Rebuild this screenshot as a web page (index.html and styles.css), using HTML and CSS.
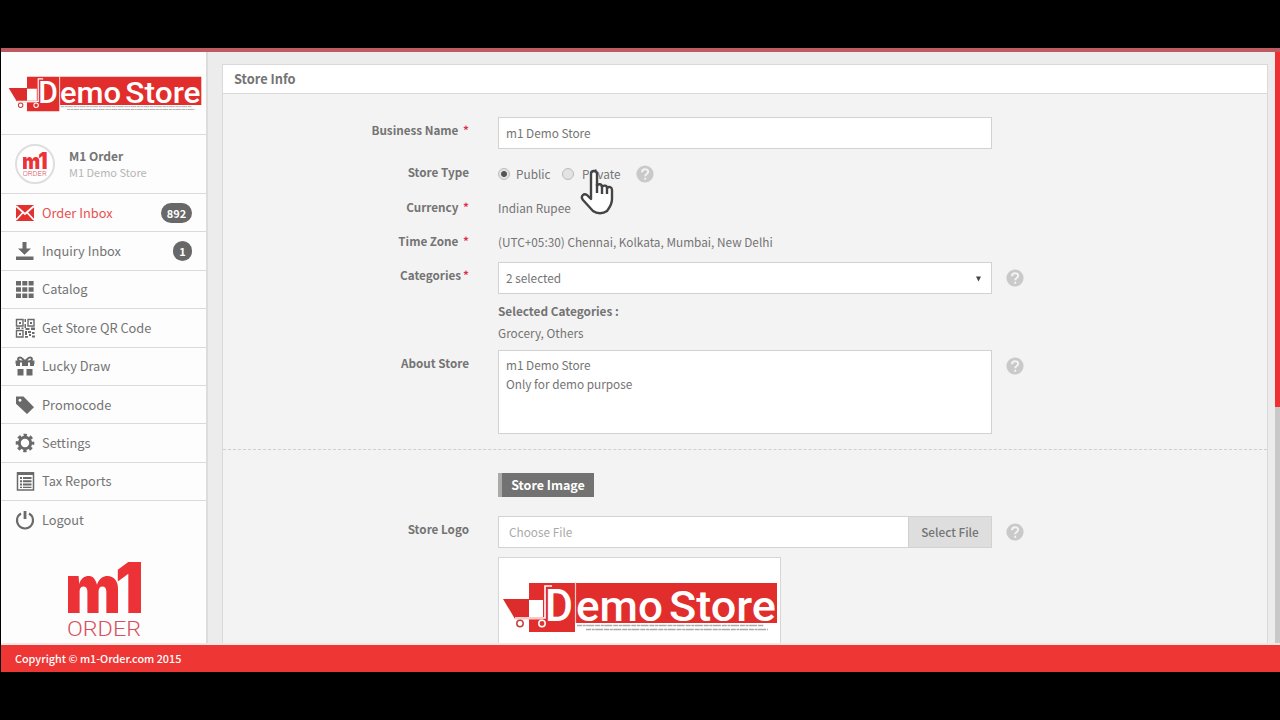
FILE: index.html
```html
<!DOCTYPE html>
<html lang="en">
<head>
    <meta charset="UTF-8">
    <meta name="viewport" content="width=device-width, initial-scale=1.0">
    <title>m1 Order - Store Info</title>
    <link rel="stylesheet" href="styles.css">
</head>
<body>
    <!-- shared drawings -->
    <svg class="defs" width="0" height="0">
        <symbol id="demo-logo" viewBox="0 0 276 51">
            <path d="M1 17h26v20H13z" fill="#dd2c2c"/>
            <path d="M27 1h46v49H27zM74 1h201v40H74z" fill="#e22d2d"/>
            <path d="M27 18h14v17H27z" fill="#fff"/>
            <path d="M50 4h-7v32H13" fill="none" stroke="#fff" stroke-width="1.6"/>
            <path d="M13 37h28M73.5 0v41" fill="none" stroke="#f3c9c5" stroke-width="1.2"/>
            <circle cx="18" cy="41.500" r="3.2" fill="#fff" stroke="#c4423f" stroke-width="1.5"/>
            <circle cx="40" cy="41.500" r="3.2" fill="#d33" stroke="#fff" stroke-width="1.5"/>
            <text class="logo-text" x="43" y="38.500" font-size="44" textLength="28" lengthAdjust="spacingAndGlyphs">D</text>
            <text class="logo-text" x="74" y="38.500" font-size="43" textLength="87" lengthAdjust="spacingAndGlyphs">emo</text>
            <text class="logo-text" x="167" y="38.500" font-size="43" textLength="107" lengthAdjust="spacingAndGlyphs">Store</text>
            <path d="M75 43.5h187M84 47.5h182" fill="none" stroke="#aaa" stroke-width="1.3" stroke-dasharray="5 .7 3 .5 8 .9"/>
        </symbol>
        <symbol id="m1-logo" viewBox="0 0 74 76">
            <text class="m1-text" x="-3" y="51" font-size="67" textLength="56" lengthAdjust="spacingAndGlyphs">m</text>
            <text class="m1-text" x="47" y="51" font-size="70" textLength="29" lengthAdjust="spacingAndGlyphs">1</text>
            <text class="order-text" x="-1" y="74" font-size="21" textLength="74" lengthAdjust="spacingAndGlyphs">ORDER</text>
        </symbol>
        <symbol id="help" viewBox="0 0 18 18">
            <circle cx="9" cy="9" r="8.6" fill="#c9c9c9"/>
            <path d="M6 7.2C6 3.2 12.2 3.3 12.2 6.8C12.2 9 9.2 8.9 9.2 11.2M9.2 12.7v2" fill="none" stroke="#f3f3f3" stroke-width="2"/>
        </symbol>
    </svg>

    <div class="app">
        <div class="main">
            <aside class="sidebar">
                <div class="brand"><svg width="194" height="36"><use href="#demo-logo"/></svg></div>
                <div class="profile">
                    <div class="avatar"><svg width="24" height="25"><use href="#m1-logo"/></svg></div>
                    <div>
                        <div class="profile-name">M1 Order</div>
                        <div class="profile-store">M1 Demo Store</div>
                    </div>
                </div>
                <nav class="menu">
                    <a class="item active">
                        <svg class="icon" viewBox="0 0 20 18"><path d="M1 1h18v16H1z" fill="#e3312f"/><path d="M1 2l9 8 9-8M1 16l6.5-7M19 16l-6.5-7" fill="none" stroke="#fff" stroke-width="1.8"/></svg>
                        <span>Order Inbox</span><b class="count">892</b>
                    </a>
                    <a class="item">
                        <svg class="icon" viewBox="0 0 20 20"><path d="M7.500 1h4v6.500H16l-6.500 6.300L3 7.500h4.500zM1 15.500h17.500v3.500H1z"/></svg>
                        <span>Inquiry Inbox</span><b class="count">1</b>
                    </a>
                    <a class="item">
                        <svg class="icon" viewBox="0 0 20 20"><path d="M1 2h5v4.500H1zM7.300 2h5v4.500h-5zM13.600 2h5v4.500h-5zM1 8.200h5v4.500H1zM7.300 8.200h5v4.500h-5zM13.600 8.200h5v4.500h-5zM1 14.400h5v4.500H1zM7.300 14.400h5v4.500h-5zM13.600 14.400h5v4.500h-5z"/></svg>
                        <span>Catalog</span>
                    </a>
                    <a class="item">
                        <svg class="icon" viewBox="0 0 20 20"><path d="M1.5 1.5H8V8H1.5zM13 1.5h6V8h-6zM1.5 12.5H8V19H1.5z" fill="none" stroke="#6a6a6a" stroke-width="1.4"/><path d="M4 4h2v2H4zM15 4h2v2h-2zM4 15h2v2H4zM9.500 1h1.500v3H9.500zM9.500 6h1.500v4H9.500zM1 9.500h4V11H1zM6.500 9.500h2V11h-2zM10.500 10h4v2h-4zM16 9.500h4V12h-4zM10 13h2v4h-2zM13 13h3v2h-3zM17 14h2.500v2H17zM14 16h2v2h-2zM10 18h3v1.700h-3zM17 17.500h3v2h-3z"/></svg>
                        <span>Get Store QR Code</span>
                    </a>
                    <a class="item">
                        <svg class="icon" viewBox="0 0 20 20"><path d="M1.5 8V5.5h17V8M7.5 5.500C2 5.500 2 1.500 5 1.500c2 0 3 2.500 5 3.500 2-1 3-3.500 5-3.500 3 0 3 4-2.500 4" fill="none" stroke="#6a6a6a" stroke-width="1.9"/><path d="M1 6h4v4H1zM7 6h6v4H7zM15 6h4v4h-4zM2.500 13h6v6.500h-6zM11.500 13h6v6.500h-6z"/></svg>
                        <span>Lucky Draw</span>
                    </a>
                    <a class="item">
                        <svg class="icon" viewBox="0 0 20 20"><path fill-rule="evenodd" d="M1 1.500h7.500L19 12.200 12 19 1 8.800zM5 3.700a1.500 1.500 0 1 0 .01 0z"/></svg>
                        <span>Promocode</span>
                    </a>
                    <a class="item">
                        <svg class="icon" viewBox="0 0 20 20"><circle cx="10" cy="10" r="5.7" fill="none" stroke="#6a6a6a" stroke-width="3"/><circle cx="10" cy="10" r="7.9" fill="none" stroke="#6a6a6a" stroke-width="2.8" stroke-dasharray="3.3 2.905" stroke-dashoffset="1.65"/></svg>
                        <span>Settings</span>
                    </a>
                    <a class="item">
                        <svg class="icon" viewBox="0 0 20 20"><path d="M2.5 2h16v17h-16z" fill="none" stroke="#6a6a6a" stroke-width="1.5"/><path d="M2 1h17v3H2zM5 6h2v2H5zM8 6h8.500v2H8zM5 9.300h2v2H5zM8 9.300h8.500v2H8zM5 12.600h2v2H5zM8 12.600h8.500v2H8zM5 15.700h2V17H5zM8 15.700h8.500V17H8z"/></svg>
                        <span>Tax Reports</span>
                    </a>
                    <a class="item">
                        <svg class="icon" viewBox="0 0 20 20"><path d="M6 3.500a8 8 0 1 0 8 0" fill="none" stroke="#6a6a6a" stroke-width="2.1"/><path d="M8.600 1h2.800v8H8.600z"/></svg>
                        <span>Logout</span>
                    </a>
                </nav>
                <svg class="side-logo" width="74" height="76"><use href="#m1-logo"/></svg>
            </aside>

            <section class="content">
                <div class="panel">
                    <h2 class="panel-title">Store Info</h2>
                    <div class="form">
                        <div class="row row-name">
                            <label class="boxed">Business Name <i>*</i></label>
                            <div class="field">m1 Demo Store</div>
                        </div>
                        <div class="row row-text">
                            <label>Store Type</label>
                            <div class="choices">
                                <span class="radio checked"></span><span class="choice">Public</span>
                                <span class="radio"></span><span class="choice private">Private
                                    <svg class="hand" width="36" height="48" viewBox="0 0 36 48"><path d="M11 23V5c0-4 6-4 6 0v12c1-3 5-2 5 1 1-2 5-2 5 1 2-2 5-1 5 2v9c0 6-3 9-5 12-4 3-10 3-14 0L3 31c-3-4 1-7 4-5l4 4z" fill="#fff" stroke="#444" stroke-width="2.4" stroke-linejoin="round"/><path d="M17 15v9M22 17v8M27 19v6" stroke="#444" stroke-width="2.4"/></svg>
                                </span>
                                <svg width="18" height="18"><use href="#help"/></svg>
                            </div>
                        </div>
                        <div class="row row-text">
                            <label>Currency <i>*</i></label>
                            <div class="value">Indian Rupee</div>
                        </div>
                        <div class="row row-zone">
                            <label>Time Zone <i>*</i></label>
                            <div class="value">(UTC+05:30) Chennai, Kolkata, Mumbai, New Delhi</div>
                        </div>
                        <div class="row row-cat">
                            <label class="boxed">Categories<i>*</i></label>
                            <div>
                                <div class="field select">2 selected<svg width="5" height="6" viewBox="0 0 6 7"><path d="M0 .5h6L3 6.500z" fill="#444"/></svg></div>
                                <div class="picked"><b>Selected Categories :</b><br>Grocery, Others</div>
                            </div>
                            <svg class="help" width="18" height="18"><use href="#help"/></svg>
                        </div>
                        <div class="row row-about">
                            <label class="boxed">About Store</label>
                            <div class="field area">m1 Demo Store<br>Only for demo purpose</div>
                            <svg class="help" width="18" height="18"><use href="#help"/></svg>
                        </div>
                    </div>
                    <div class="form images">
                        <div class="row row-badge"><span></span><span class="badge">Store Image</span></div>
                        <div class="row">
                            <label class="boxed">Store Logo</label>
                            <div>
                                <div class="file"><span class="placeholder">Choose File</span><span class="button">Select File</span></div>
                                <div class="preview"><svg width="276" height="51"><use href="#demo-logo"/></svg></div>
                            </div>
                            <svg class="help" width="18" height="18"><use href="#help"/></svg>
                        </div>
                    </div>
                </div>
                <div class="scrollbar"><div class="thumb"></div></div>
            </section>
        </div>
        <footer class="footer">Copyright © m1-Order.com 2015</footer>
    </div>
</body>
</html>
```

FILE: styles.css
```css
* {
    box-sizing: border-box;
}
body {
    margin: 0;
    padding: 48px 0 48px 1px;
    height: 720px;
    overflow: hidden;
    background: #000;
    color: #747474;
    font: 12.8px/20px "Noto Sans CJK SC", "Open Sans", sans-serif;
}
svg {
    display: block;
}
.defs {
    position: absolute;
}
.app {
    height: 624px;
    display: flex;
    flex-direction: column;
}
.main {
    height: 597px;
    display: flex;
    border-top: 4px solid #bd5b60;
    border-bottom: 2px solid #f6e7e4;
    background: #ececec;
    overflow: hidden;
}

/* Sidebar */
.sidebar {
    width: 207px;
    flex: none;
    background: #fdfdfd;
    border-right: 2px solid #dcdcdc;
}
.brand {
    height: 83px;
    padding: 24px 0 0 7px;
    border-bottom: 1px solid #dadada;
}
.profile {
    height: 59px;
    display: flex;
    align-items: center;
    gap: 14px;
    padding-left: 14px;
    border-bottom: 1px solid #dadada;
    line-height: 16px;
}
.avatar {
    width: 40px;
    height: 40px;
    display: flex;
    align-items: center;
    justify-content: center;
    border: 2px solid #dedede;
    border-radius: 50%;
    background: #fff;
}
.profile-name {
    font-weight: bold;
    font-size: 12px;
}
.profile-store {
    color: #b5b5b5;
    font-size: 11px;
}
.item {
    height: 38.4px;
    display: flex;
    align-items: center;
    padding: 0 14px;
    border-bottom: 1px solid #dadada;
}
.item:last-child {
    border-bottom: 0;
}
.item.active {
    color: #e8504f;
}
.icon {
    width: 20px;
    height: 20px;
    margin-right: 7px;
    fill: #6a6a6a;
}
.count {
    margin-left: auto;
    min-width: 19px;
    height: 20px;
    padding: 0 5px;
    border-radius: 10px;
    background: #686868;
    color: #fff;
    font-size: 11px;
    text-align: center;
}
.item.active .count {
    width: 31px;
}
.side-logo {
    margin: 22px 0 0 67px;
}
.logo-text {
    fill: #fff;
    font-family: Roboto, sans-serif;
    font-weight: 500;
}
.m1-text {
    fill: #ec3237;
    font-family: Inter, sans-serif;
    font-weight: 900;
}
.order-text {
    fill: #d8505c;
    font-family: Roboto, sans-serif;
    font-weight: 300;
}

/* Store form */
.content {
    flex: 1;
    display: flex;
    justify-content: space-between;
    padding-left: 14px;
}
.panel {
    width: 1046px;
    height: 620px;
    margin-top: 12px;
    border: 1px solid #d9d9d9;
    background: #f3f3f3;
    font-size: 11.8px;
}
.panel-title {
    height: 29px;
    margin: 0;
    padding-left: 11px;
    border-bottom: 1px solid #d9d9d9;
    background: #fff;
    font-size: 12.8px;
    line-height: 27px;
}
.form {
    padding-top: 23px;
}
.row {
    display: grid;
    grid-template-columns: 246px 494px 18px;
    column-gap: 29px;
    align-items: start;
}
label {
    text-align: right;
    font-weight: bold;
    font-size: 11.7px;
    line-height: 19px;
}
label.boxed {
    padding-top: 3px;
}
label i {
    margin-left: 2px;
    color: #e0314d;
    font-style: normal;
}
.help {
    margin: 7px 0 0 -15px;
}
.row-name {
    height: 45px;
}
.row-text {
    height: 34.5px;
}
.row-zone {
    height: 31px;
}
.row-cat {
    height: 88px;
}
.row-about {
    height: 99px;
}
.field {
    height: 32px;
    padding: 0 7px;
    border: 1px solid #d2d2d2;
    background: #fff;
    line-height: 30px;
}
.area {
    height: 84px;
    padding-top: 4px;
    line-height: 19px;
}
.select {
    display: flex;
    align-items: center;
    justify-content: space-between;
}
.select svg {
    margin: 2px 3px 0 0;
}
.picked {
    padding-top: 6px;
    line-height: 21.5px;
}
.value {
    padding-top: 1px;
}
.choices {
    display: flex;
    align-items: center;
    height: 23px;
}
.radio {
    width: 12px;
    height: 12px;
    border: 1px solid #bbb;
    border-radius: 50%;
    background: #e3e3e3;
}
.radio.checked {
    background: radial-gradient(circle, #555 0 2.5px, #e3e3e3 3.5px);
}
.choice {
    width: 46px;
    margin-left: 6px;
}
.radio + .private {
    position: relative;
    width: 54px;
    margin-left: 8px;
}
.hand {
    position: absolute;
    left: -2px;
    top: 5px;
}
.images {
    border-top: 1px dashed #cfcfcf;
}
.row-badge {
    height: 43px;
}
.badge {
    width: 96px;
    height: 24px;
    border-left: 4px solid #aaa;
    background: #727272;
    color: #fff;
    font-size: 12.5px;
    font-weight: bold;
    line-height: 23px;
    text-align: center;
}
.file {
    display: flex;
    height: 32px;
    border: 1px solid #d2d2d2;
    background: #fff;
    line-height: 30px;
}
.placeholder {
    flex: 1;
    padding-left: 10px;
    color: #aaa;
}
.button {
    width: 83px;
    border-left: 1px solid #cfcfcf;
    background: #dedede;
    font-weight: 500;
    text-align: center;
}
.preview {
    width: 283px;
    height: 110px;
    margin-top: 9px;
    padding: 24px 0 0 3px;
    border: 1px solid #d6d6d6;
    background: #fff;
}
.scrollbar {
    width: 5px;
    background: #c8c8c8;
}
.thumb {
    height: 355px;
    background: #ee2f33;
}

.footer {
    height: 27px;
    padding-left: 14px;
    background: #ee3635;
    color: #fff;
    font-size: 10.8px;
    font-weight: 500;
    line-height: 27px;
}
```
